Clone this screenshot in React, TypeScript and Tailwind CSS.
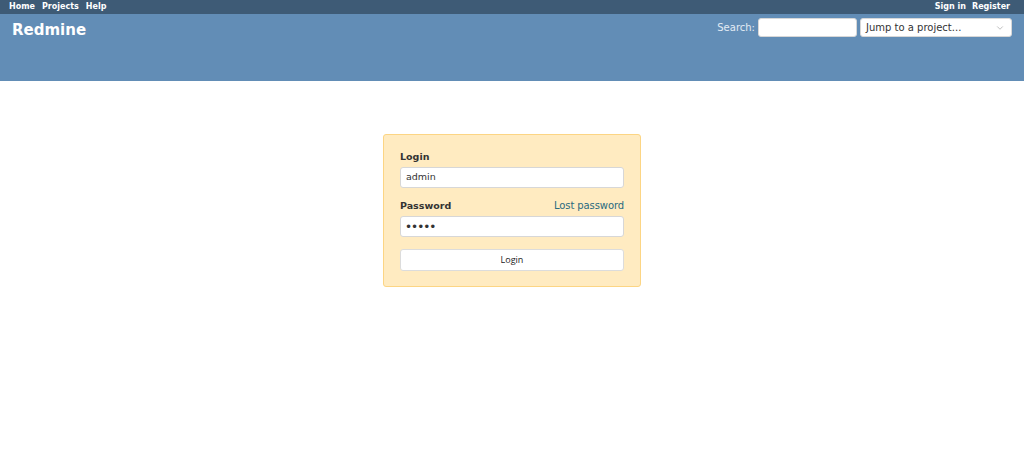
import { ChevronDown } from 'lucide-react';

const font = { fontFamily: '"DejaVu Sans", Verdana, sans-serif' };

function TopMenu() {
  return (
    <div className="flex h-[14px] items-center justify-between bg-[#3e5b76] pl-[9px] pr-[14px] text-[8px] font-bold leading-none text-white">
      <div className="flex gap-[7px]">
        <a>Home</a>
        <a>Projects</a>
        <a>Help</a>
      </div>
      <div className="flex gap-[6px]">
        <a>Sign in</a>
        <a>Register</a>
      </div>
    </div>
  );
}

function Header() {
  return (
    <div className="flex h-[67px] items-start justify-between bg-[#628db6] pl-[12px] pr-[12px] text-white">
      <h1 className="mt-[6px] text-[15px] font-bold leading-[20px]">Redmine</h1>
      <div className="mt-[4px] flex items-center">
        <span className="mr-[3px] text-[10px] text-[#e3ebf4]">Search:</span>
        <input className="h-[19px] w-[99px] rounded-[3px] border border-[#d7d7d7] bg-white" />
        <div className="ml-[3px] flex h-[19px] w-[152px] items-center justify-between rounded-[3px] border border-[#d7d7d7] bg-white pl-[5px] pr-[6px] text-[10px] text-[#333]">
          <span>Jump to a project...</span>
          <ChevronDown size={10} className="text-[#999]" strokeWidth={1.5} />
        </div>
      </div>
    </div>
  );
}

function LoginBox() {
  return (
    <div className="mx-auto mt-[53px] w-[258px] rounded-[3px] border border-[#fcd584] bg-[#ffebc1] px-[16px] pb-[15px] pt-[15px]">
      <label className="block text-[9.5px] font-bold leading-[14px] text-[#333]">Login</label>
      <div className="mt-[3px] flex h-[21px] items-center rounded-[3px] border border-[#d7d7d7] bg-white px-[5px] text-[9.5px] text-[#333]">
        admin
      </div>
      <div className="mt-[11px] flex items-center justify-between leading-[14px]">
        <label className="text-[9.5px] font-bold text-[#333]">Password</label>
        <a className="text-[10px] tracking-[-0.1px] text-[#2a6a7f]">Lost password</a>
      </div>
      <input
        type="password"
        readOnly
        value="admin"
        className="mt-[3px] block h-[21px] w-full rounded-[3px] border border-[#d7d7d7] bg-white px-[4px] text-[12px] tracking-[-1px] text-[#333] outline-none"
      />
      <button className="mt-[12px] flex h-[22px] w-full items-center justify-center rounded-[3px] border border-[#dcdcdc] bg-white text-[9px] text-[#222]" style={{ fontFamily: '"Open Sans", sans-serif' }}>
        Login
      </button>
    </div>
  );
}

export default function App() {
  return (
    <div className="min-h-[467px] bg-white" style={font}>
      <TopMenu />
      <Header />
      <LoginBox />
    </div>
  );
}
